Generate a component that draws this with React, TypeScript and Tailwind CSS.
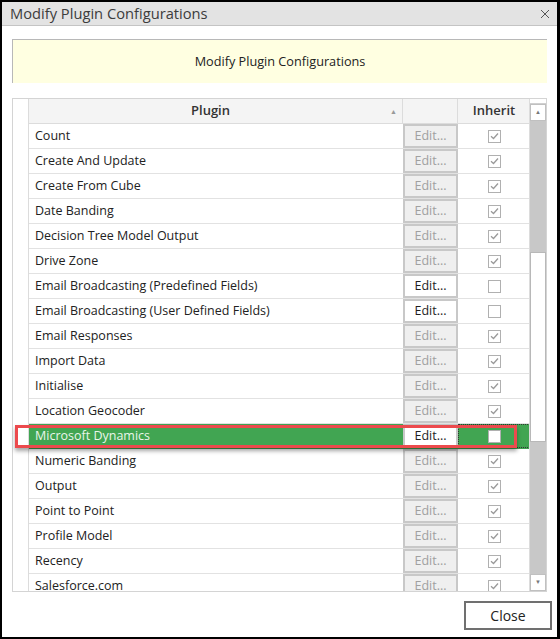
import React from "react";

type Row = { name: string; enabled: boolean; selected?: boolean };

const rows: Row[] = [
  { name: "Count", enabled: false },
  { name: "Create And Update", enabled: false },
  { name: "Create From Cube", enabled: false },
  { name: "Date Banding", enabled: false },
  { name: "Decision Tree Model Output", enabled: false },
  { name: "Drive Zone", enabled: false },
  { name: "Email Broadcasting (Predefined Fields)", enabled: true },
  { name: "Email Broadcasting (User Defined Fields)", enabled: true },
  { name: "Email Responses", enabled: false },
  { name: "Import Data", enabled: false },
  { name: "Initialise", enabled: false },
  { name: "Location Geocoder", enabled: false },
  { name: "Microsoft Dynamics", enabled: true, selected: true },
  { name: "Numeric Banding", enabled: false },
  { name: "Output", enabled: false },
  { name: "Point to Point", enabled: false },
  { name: "Profile Model", enabled: false },
  { name: "Recency", enabled: false },
  { name: "Salesforce.com", enabled: false },
];

const font = { fontFamily: '"Open Sans", "Noto Sans", sans-serif' };

function Check({ checked }: { checked: boolean }) {
  return (
    <div className="w-[13px] h-[13px] border border-[#b0b0b0] bg-white flex items-center justify-center">
      {checked && (
        <svg width="9" height="8" viewBox="0 0 9 8">
          <path d="M1 4.2 L3.5 6.5 L8 1.5" fill="none" stroke="#9a9a9a" strokeWidth="1.3" />
        </svg>
      )}
    </div>
  );
}

export default function App() {
  return (
    <div
      className="relative w-[560px] h-[639px] bg-white border-l-2 border-t-2 border-b-2 border-r-[3px] border-black flex flex-col overflow-hidden"
      style={font}
    >
      <div className="h-[24px] shrink-0 bg-[#e3e3e3] border-b border-[#c4c4c4] flex items-center justify-between pl-[8px] pr-[6px]">
        <span className="text-[14.7px] text-[#3c3c3c] leading-none">Modify Plugin Configurations</span>
        <svg width="10" height="10" viewBox="0 0 10 10" className="mr-[1px]">
          <path d="M1 1 L9 9 M9 1 L1 9" stroke="#555" strokeWidth="1" />
        </svg>
      </div>

      <div className="flex-1 flex flex-col pl-[10px] pr-[5px]">
        <div className="mr-[5px] mt-[13px] h-[44px] bg-[#ffffe1] border-t border-l border-[#b8b8b8] flex items-center justify-center">
          <span className="text-[12.7px] text-[#222]">Modify Plugin Configurations</span>
        </div>

        <div className="mr-[5px] mt-[15px] h-[494px] border border-[#d4d4d4] flex overflow-hidden">
          <div className="w-[16px] shrink-0 border-r border-[#dcdcdc] bg-white" />
          <div className="flex-1 flex flex-col overflow-hidden">
            <div className="h-[25px] shrink-0 flex border-b border-[#dcdcdc]">
              <div className="w-[374px] shrink-0 bg-[#f4f4f4] border-r border-[#dcdcdc] relative flex items-center justify-center pr-[10px]">
                <span className="text-[13px] font-semibold text-[#333]">Plugin</span>
                <span className="absolute right-[5px] top-[8px] text-[7px] text-[#999]">▲</span>
              </div>
              <div className="w-[55px] shrink-0 bg-[#f4f4f4] border-r border-[#dcdcdc]" />
              <div className="w-[72px] shrink-0 bg-[#f4f4f4] flex items-center justify-center">
                <span className="text-[13px] font-semibold text-[#333]">Inherit</span>
              </div>
            </div>
            {rows.map((r) => (
              <div
                key={r.name}
                className={`h-[25px] shrink-0 flex border-b ${r.selected ? "border-[#3f9f4f]" : "border-[#e2e2e2]"}`}
              >
                <div
                  className={`w-[374px] shrink-0 flex items-center pl-[6px] pt-[1px] ${
                    r.selected ? "bg-[#41a552] text-[#eaf5ea]" : "bg-white text-[#222]"
                  }`}
                >
                  <span className="text-[12.5px]">{r.name}</span>
                </div>
                <div className={`w-[55px] shrink-0 flex items-center ${r.selected ? "bg-[#41a552]" : "bg-white"}`}>
                  <div
                    className={`w-[55px] h-[24px] border-2 flex items-center justify-center pt-[1px] ${
                      r.enabled
                        ? "bg-white border-[#c8c8c8] text-[#1e1e1e]"
                        : "bg-[#efefef] border-[#c8c8c8] text-[#a0a0a0]"
                    }`}
                  >
                    <span className="text-[12.5px]">Edit...</span>
                  </div>
                </div>
                <div
                  className={`w-[72px] shrink-0 flex items-center justify-center ${
                    r.selected ? "bg-[#41a552] border border-dotted border-[#333]" : "bg-white"
                  }`}
                >
                  <Check checked={!r.enabled} />
                </div>
              </div>
            ))}
          </div>

          <div className="w-[17px] shrink-0 flex flex-col bg-[#c8c8c8] border-l border-[#dcdcdc]">
            <div className="h-[5px] bg-white border-b border-[#d0d0d0]" />
            <div className="h-[17px] bg-white border border-[#c0c0c0] flex items-center justify-center">
              <span className="text-[6px] text-[#777]">▲</span>
            </div>
            <div className="h-[131px]" />
            <div className="h-[190px] bg-white border border-[#b8b8b8]" />
            <div className="flex-1" />
            <div className="h-[17px] bg-white border border-[#c0c0c0] flex items-center justify-center">
              <span className="text-[6px] text-[#777]">▼</span>
            </div>
          </div>
        </div>

        <div className="flex justify-end mt-[9px]">
          <button className="w-[88px] h-[29px] border-2 border-[#707070] bg-white text-[14px] text-[#222]">
            Close
          </button>
        </div>
      </div>

      <div className="absolute left-[13px] top-[423px] w-[502px] h-[23px] border-[3px] border-[#ec4a4d] shadow-[0_3px_4px_rgba(0,0,0,0.35)]" />
    </div>
  );
}
